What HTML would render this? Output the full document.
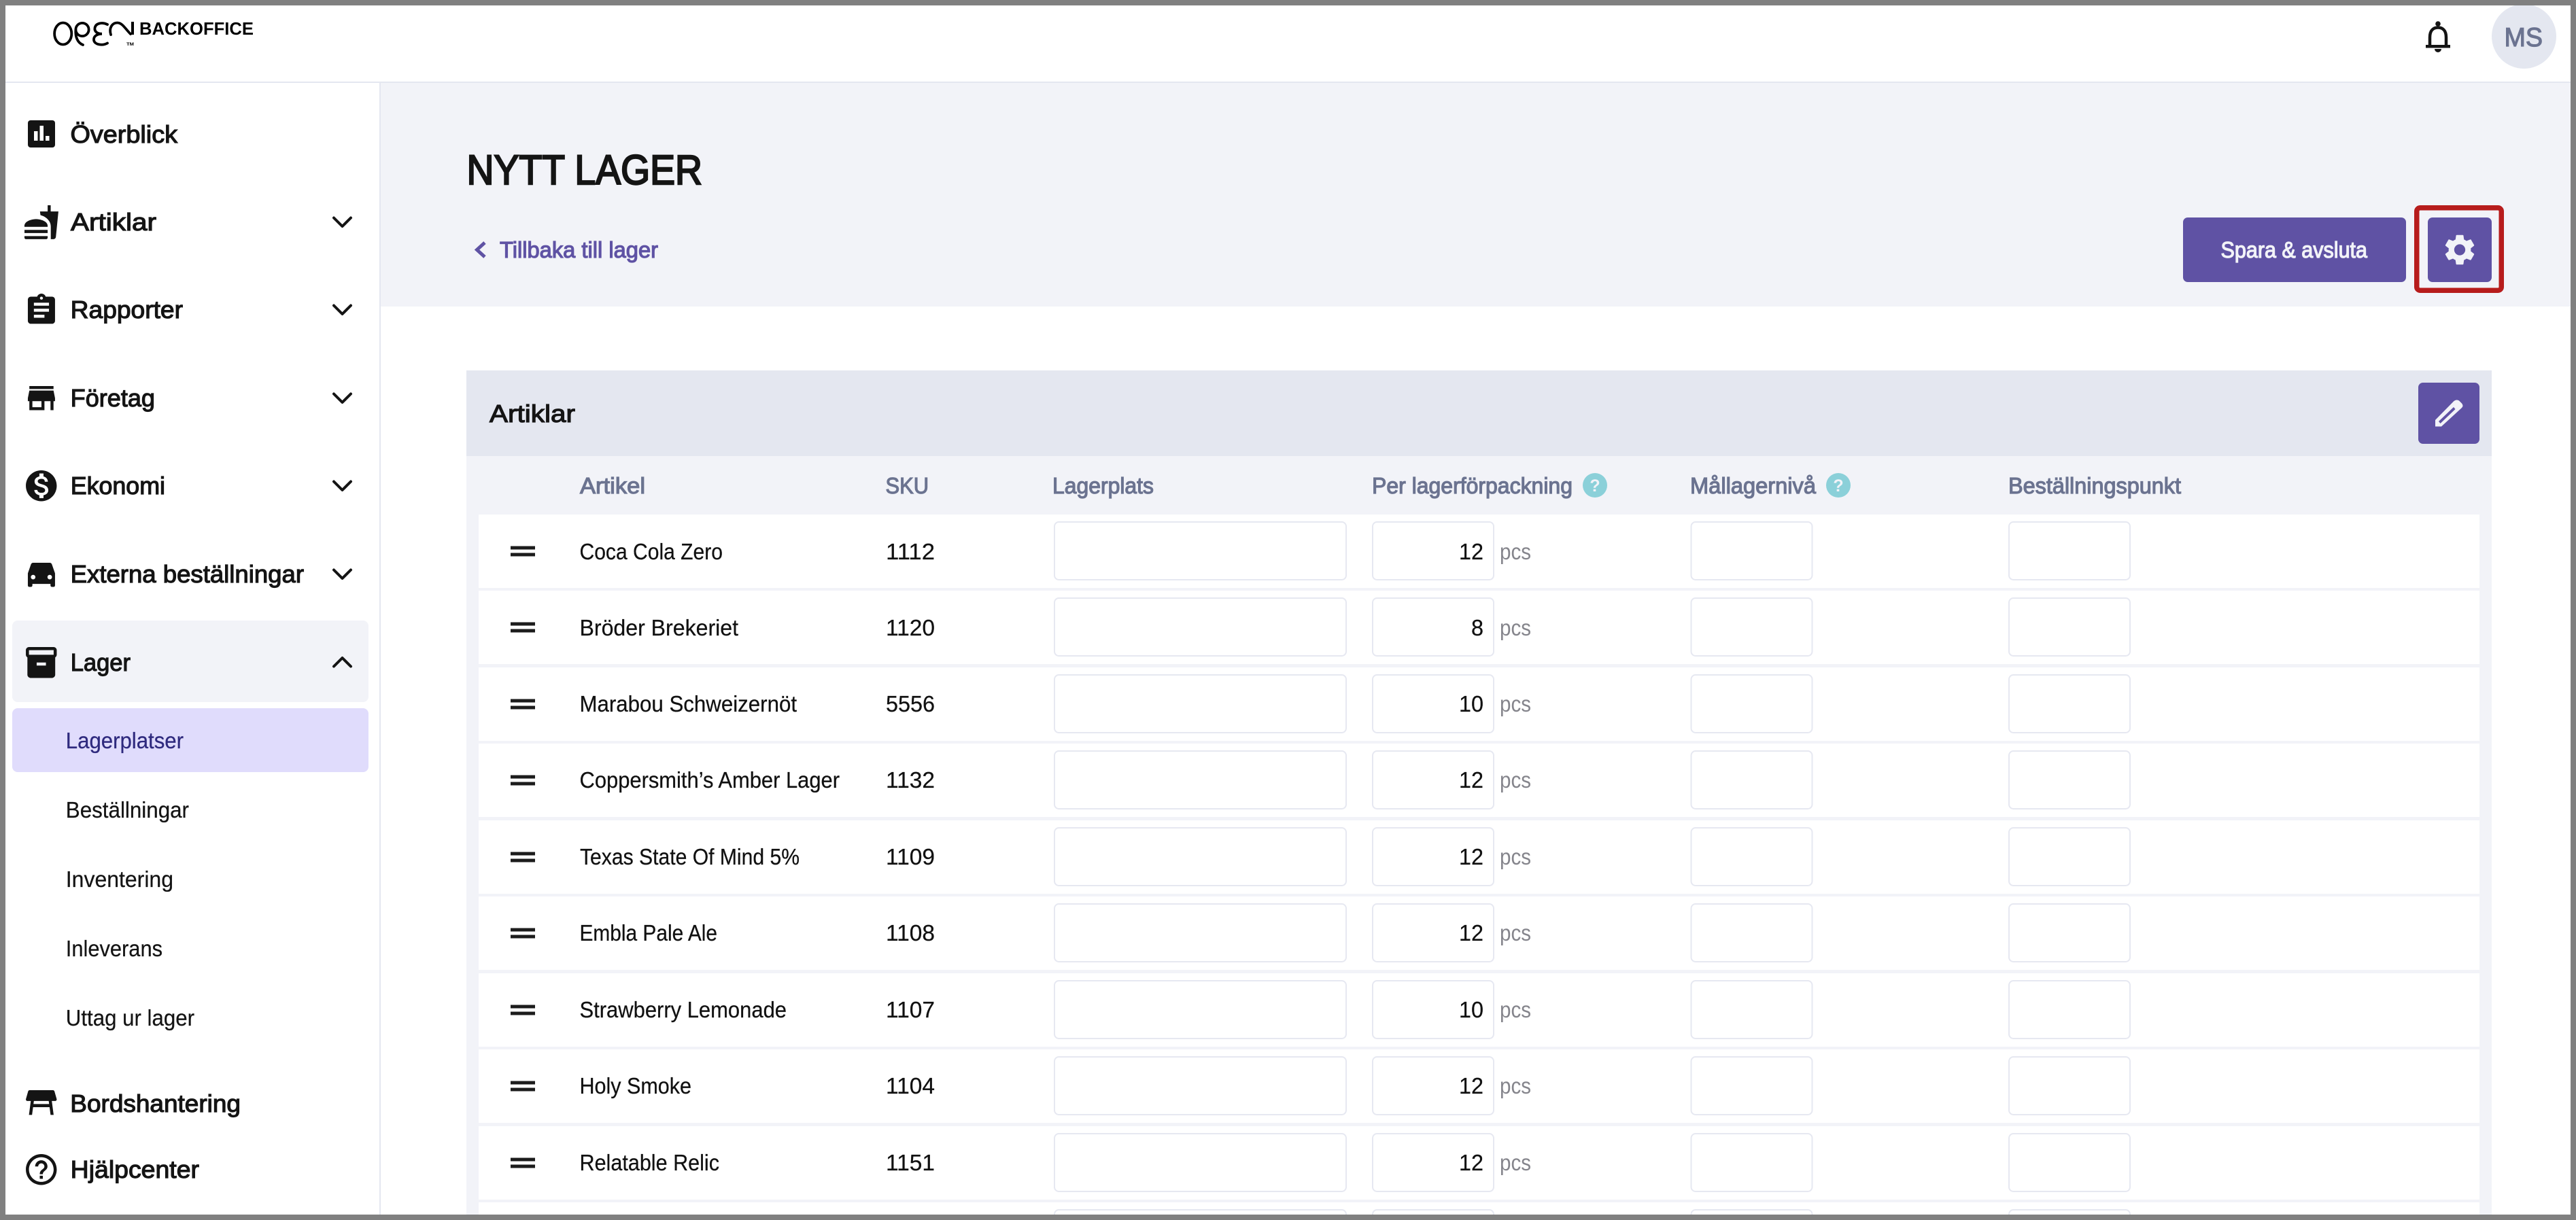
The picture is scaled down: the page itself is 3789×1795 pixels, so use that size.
<!DOCTYPE html>
<html lang="sv">
<head>
<meta charset="utf-8">
<title>Nytt lager</title>
<style>
html,body{margin:0;padding:0;background:#fff;width:3789px;height:1795px;overflow:hidden}
svg{display:block}
text{font-family:"Liberation Sans",sans-serif;fill:#141414}
.n{font-size:36px;stroke:#141414;stroke-width:1.2px}
.s{font-size:33px;stroke:#141414;stroke-width:.25px}
.h{font-size:33px;fill:#6b7390;stroke:#6b7390;stroke-width:1.2px}
.c{font-size:33px;fill:#111;stroke:#111;stroke-width:.25px}
.p{font-size:33px;fill:#85858c}
.ic{fill:#141414}
.ch{fill:none;stroke:#141414;stroke-width:4;stroke-linecap:round;stroke-linejoin:round}
</style>
</head>
<body>
<svg xmlns="http://www.w3.org/2000/svg" width="3789" height="1795" viewBox="0 0 3789 1795">
<defs>
<g id="row">
<rect x="704" y="0" width="2943" height="108" fill="#fff"/>
<rect x="751" y="46.5" width="36" height="5" fill="#1c1c1c"/>
<rect x="751" y="56.5" width="36" height="5" fill="#1c1c1c"/>
<rect x="1551" y="11" width="429" height="85" rx="6.5" fill="#fff" stroke="#e6e8f1" stroke-width="2"/>
<rect x="2019" y="11" width="178" height="85" rx="6.5" fill="#fff" stroke="#e6e8f1" stroke-width="2"/>
<rect x="2487.5" y="11" width="178" height="85" rx="6.5" fill="#fff" stroke="#e6e8f1" stroke-width="2"/>
<rect x="2955" y="11" width="178" height="85" rx="6.5" fill="#fff" stroke="#e6e8f1" stroke-width="2"/>
</g>
</defs>

<rect width="3789" height="1795" fill="#fff"/>

<!-- content header -->
<rect x="560" y="122" width="3229" height="329" fill="#f2f3f8"/>
<rect x="0" y="120" width="3789" height="2" fill="#e4e7f0"/>
<rect x="558" y="122" width="2" height="1673" fill="#e4e7f0"/>

<!-- logo -->
<g fill="none" stroke="#000" stroke-width="3.8" stroke-linecap="round">
<ellipse cx="92.7" cy="49.5" rx="12.6" ry="16"/>
<circle cx="121" cy="43.5" r="9.6"/>
<path d="M111.4 43.5C110.5 54 114 63 122 66"/>
<path d="M158 36C151 32.5 141 33.5 139.5 41C138.500 47 144 49.800 150 49.800C143 49.800 137.500 53 138 59C139 66 151 67.500 158 63.500"/>
<path d="M163 51C160 41 165 33.500 172.500 33.500C180 33.500 184 42 192 50"/>
</g>
<rect x="193" y="32" width="4" height="19" fill="#000"/>
<text x="186" y="67" font-size="6" font-weight="700" textLength="11" lengthAdjust="spacingAndGlyphs" style="fill:#000">TM</text>
<text x="205" y="51" font-size="26" font-weight="700" textLength="168" lengthAdjust="spacingAndGlyphs" style="fill:#000">BACKOFFICE</text>

<!-- sidebar active backgrounds -->
<rect x="18" y="913" width="524" height="120" rx="8" fill="#f2f3f8"/>
<rect x="18" y="1042" width="524" height="94" rx="8" fill="#e0dcfc"/>

<!-- sidebar icons -->
<rect x="41" y="177" width="40" height="40" rx="4" class="ic"/>
<rect x="50" y="193" width="5.500" height="14" fill="#fff"/>
<rect x="58.500" y="185" width="5.500" height="22" fill="#fff"/>
<rect x="67" y="200" width="5.500" height="7" fill="#fff"/>

<svg x="33.700" y="299.700" width="54.500" height="54.500" viewBox="0 0 24 24"><path class="ic" d="M18.060 22.990h1.660c.84 0 1.530-.64 1.630-1.460L23 5.050h-5V1h-1.970v4.050h-4.970l.3 2.340c1.710.47 3.310 1.320 4.270 2.260 1.440 1.420 2.430 2.890 2.430 5.290v8.050zM1 21.990V21h15.030v.99c0 .55-.45 1-1.010 1H2.010c-.56 0-1.010-.45-1.010-1zm15.030-7c.5-3.990-5.500-4.990-7.510-4.990-2.010 0-8.020 1-7.520 4.990h15.030zM1.020 17h15v2h-15z"/></svg>
<svg x="34.300" y="429.800" width="53.300" height="53.300" viewBox="0 0 24 24"><path class="ic" d="M19 3h-4.180C14.400 1.840 13.300 1 12 1c-1.300 0-2.400.84-2.820 2H5c-1.100 0-2 .9-2 2v14c0 1.100.9 2 2 2h14c1.100 0 2-.9 2-2V5c0-1.100-.9-2-2-2zm-7 0c.55 0 1 .45 1 1s-.45 1-1 1-1-.45-1-1 .45-1 1-1zm2 14H7v-2h7v2zm3-4H7v-2h10v2zm0-4H7V7h10v2z"/></svg>
<svg x="34.300" y="559.100" width="53.300" height="53.300" viewBox="0 0 24 24"><path class="ic" d="M20 4H4v2h16V4zm1 10v-2l-1-5H4l-1 5v2h1v6h10v-6h4v6h2v-6h1zm-9 4H6v-4h6v4z"/></svg>
<svg x="33.500" y="687.500" width="54.500" height="54.500" viewBox="0 0 24 24"><path class="ic" d="M12 2C6.480 2 2 6.480 2 12s4.480 10 10 10 10-4.480 10-10S17.520 2 12 2zm1.410 16.090V20h-2.670v-1.930c-1.710-.36-3.160-1.460-3.270-3.400h1.960c.1 1.050.82 1.870 2.650 1.870 1.960 0 2.400-.98 2.400-1.590 0-.83-.44-1.610-2.670-2.140-2.480-.6-4.180-1.620-4.180-3.670 0-1.720 1.390-2.840 3.110-3.210V4h2.670v1.950c1.860.45 2.790 1.860 2.850 3.390H14.300c-.05-1.110-.64-1.870-2.220-1.870-1.500 0-2.400.68-2.400 1.640 0 .84.65 1.390 2.670 1.910s4.180 1.390 4.180 3.910c-.01 1.830-1.380 2.830-3.120 3.160z"/></svg>
<svg x="34.300" y="816.900" width="53.300" height="53.300" viewBox="0 0 24 24"><path class="ic" fill-rule="evenodd" d="M18.920 6.010C18.720 5.420 18.160 5 17.500 5h-11c-.66 0-1.210.42-1.420 1.010L3 12v8c0 .55.45 1 1 1h1c.55 0 1-.45 1-1v-1h12v1c0 .55.45 1 1 1h1c.55 0 1-.45 1-1v-8l-2.080-5.990zM6.500 16c-.83 0-1.500-.67-1.500-1.500S5.670 13 6.500 13s1.500.67 1.500 1.500S7.330 16 6.500 16zm11 0c-.83 0-1.500-.67-1.500-1.500s.67-1.500 1.500-1.500 1.500.67 1.500 1.500-.67 1.500-1.500 1.500z"/></svg>
<svg x="33.500" y="947.500" width="54.500" height="54.500" viewBox="0 0 24 24"><path class="ic" d="M20 2H4c-1 0-2 .9-2 2v3.010c0 .72.43 1.340 1 1.690V20c0 1.100 1.100 2 2 2h14c.9 0 2-.9 2-2V8.700c.57-.35 1-.97 1-1.690V4c0-1.100-1-2-2-2zm-5 12H9v-2h6v2zm5-7H4V4l16-.02V7z"/></svg>
<svg x="33.500" y="1594.900" width="54.500" height="54.500" viewBox="0 0 24 24"><path class="ic" d="M21.960 9.730l-1.430-5C20.410 4.300 20.020 4 19.570 4H4.430C3.980 4 3.590 4.300 3.470 4.730l-1.430 5C1.860 10.360 2.340 11 3 11h2.200L4 20h2l.67-5h10.670L18 20h2l-1.200-9H21C21.660 11 22.140 10.360 21.960 9.730zM6.930 13l.27-2h9.600l.27 2H6.930z"/></svg>
<svg x="33.500" y="1693.500" width="54.500" height="54.500" viewBox="0 0 24 24"><path class="ic" d="M11 18h2v-2h-2v2zm1-16C6.480 2 2 6.480 2 12s4.480 10 10 10 10-4.480 10-10S17.520 2 12 2zm0 18c-4.410 0-8-3.590-8-8s3.590-8 8-8 8 3.590 8 8-3.590 8-8 8zm0-14c-2.210 0-4 1.790-4 4h2c0-1.100.9-2 2-2s2 .9 2 2c0 2-3 1.750-3 5h2c0-2.250 3-2.500 3-5 0-2.210-1.790-4-4-4z"/></svg>

<!-- sidebar labels -->
<text class="n" x="103.500" y="210" textLength="157.500" lengthAdjust="spacingAndGlyphs">Överblick</text>
<text class="n" x="104" y="339" textLength="126" lengthAdjust="spacingAndGlyphs">Artiklar</text>
<text class="n" x="103.700" y="468" textLength="165.300" lengthAdjust="spacingAndGlyphs">Rapporter</text>
<text class="n" x="103.700" y="598" textLength="124.300" lengthAdjust="spacingAndGlyphs">Företag</text>
<text class="n" x="103.700" y="727" textLength="139.300" lengthAdjust="spacingAndGlyphs">Ekonomi</text>
<text class="n" x="103.700" y="857" textLength="343.300" lengthAdjust="spacingAndGlyphs">Externa beställningar</text>
<text class="n" x="103.700" y="987" textLength="88.300" lengthAdjust="spacingAndGlyphs">Lager</text>
<text class="s" x="96.800" y="1101" textLength="173.200" lengthAdjust="spacingAndGlyphs" style="fill:#2f2a7e;stroke:#2f2a7e">Lagerplatser</text>
<text class="s" x="96.800" y="1203" textLength="181.200" lengthAdjust="spacingAndGlyphs">Beställningar</text>
<text class="s" x="96.800" y="1305" textLength="158.200" lengthAdjust="spacingAndGlyphs">Inventering</text>
<text class="s" x="96.800" y="1407" textLength="142.200" lengthAdjust="spacingAndGlyphs">Inleverans</text>
<text class="s" x="96.800" y="1509" textLength="189.200" lengthAdjust="spacingAndGlyphs">Uttag ur lager</text>
<text class="n" x="103.300" y="1636" textLength="250.700" lengthAdjust="spacingAndGlyphs">Bordshantering</text>
<text class="n" x="103.700" y="1733" textLength="189.300" lengthAdjust="spacingAndGlyphs">Hjälpcenter</text>

<!-- chevrons -->
<path class="ch" d="M491 320.500l12.500 12.500L516 320.500"/>
<path class="ch" d="M491 449.500l12.500 12.500L516 449.500"/>
<path class="ch" d="M491 579.500l12.500 12.500L516 579.500"/>
<path class="ch" d="M491 708.500l12.500 12.500L516 708.500"/>
<path class="ch" d="M491 838.500l12.500 12.500L516 838.500"/>
<path class="ch" d="M491 980.500l12.500-12.500L516 980.500"/>

<!-- top right -->
<path d="M3574 67V55C3574 45 3579 40.500 3586 40.500C3593 40.500 3598 45 3598 55V67" fill="none" stroke="#141414" stroke-width="4.500"/>
<rect x="3568" y="66" width="36" height="4.500" fill="#141414"/>
<circle cx="3586" cy="35" r="3.800" fill="#141414"/>
<path d="M3581 72h10a5 5 0 0 1-10 0z" fill="#141414"/>
<circle cx="3712.500" cy="53.500" r="47.500" fill="#e4e7f0"/>
<text x="3683.500" y="68" font-size="39" textLength="56.500" lengthAdjust="spacingAndGlyphs" style="fill:#6b7390;stroke:#6b7390;stroke-width:1.200px">MS</text>

<!-- page title -->
<text x="686.500" y="271" font-size="61" textLength="346.500" lengthAdjust="spacingAndGlyphs" style="stroke:#141414;stroke-width:2.400px">NYTT LAGER</text>
<path d="M713 357l-11.500 10.500L713 378" fill="none" stroke="#5f52a4" stroke-width="5"/>
<text x="735" y="379" font-size="33" textLength="233" lengthAdjust="spacingAndGlyphs" style="fill:#5f52a4;stroke:#5f52a4;stroke-width:1.200px">Tillbaka till lager</text>

<!-- buttons -->
<rect x="3211" y="320" width="328" height="95" rx="7" fill="#5f52a4"/>
<text x="3266.500" y="379" font-size="33" textLength="215.500" lengthAdjust="spacingAndGlyphs" style="fill:#f2f3f8;stroke:#f2f3f8;stroke-width:1.200px">Spara &amp; avsluta</text>
<rect x="3571" y="320" width="94" height="95" rx="7" fill="#5f52a4"/>
<svg x="3590.750" y="340.250" width="54.500" height="54.500" viewBox="0 0 24 24"><path fill="#f2f3f8" d="M19.140 12.940c.04-.3.06-.61.06-.94 0-.32-.02-.64-.07-.94l2.030-1.580c.18-.14.23-.41.12-.61l-1.920-3.320c-.12-.22-.37-.29-.59-.22l-2.390.96c-.5-.38-1.030-.7-1.620-.94l-.36-2.540c-.04-.24-.24-.41-.48-.41h-3.840c-.24 0-.43.17-.47.41l-.36 2.540c-.59.24-1.130.57-1.620.94l-2.390-.96c-.22-.08-.47 0-.59.22L2.740 8.870c-.12.21-.08.47.12.61l2.030 1.580c-.05.3-.09.63-.09.94s.02.64.07.94l-2.030 1.580c-.18.14-.23.41-.12.61l1.920 3.320c.12.22.37.29.59.22l2.390-.96c.5.38 1.030.7 1.620.94l.36 2.540c.05.24.24.41.48.41h3.840c.24 0 .44-.17.47-.41l.36-2.540c.59-.24 1.130-.56 1.620-.94l2.390.96c.22.08.47 0 .59-.22l1.920-3.320c.12-.22.07-.47-.12-.61l-2.010-1.580zM12 15.600c-1.980 0-3.600-1.620-3.600-3.600s1.620-3.600 3.600-3.600 3.600 1.620 3.600 3.600-1.620 3.600-3.600 3.600z"/></svg>
<rect x="3554.750" y="305.750" width="124.500" height="121.500" rx="5" fill="none" stroke="#b71c1c" stroke-width="7.500"/>

<!-- table -->
<rect x="686" y="671" width="2979" height="1124" fill="#f2f3f8"/>
<rect x="686" y="545" width="2979" height="126" fill="#e4e7f0"/>
<text class="n" x="720" y="621" textLength="126" lengthAdjust="spacingAndGlyphs">Artiklar</text>
<rect x="3557" y="563" width="90" height="90" rx="7" fill="#5f52a4"/>
<path fill="#f2f3f8" fill-rule="evenodd" d="M3582 618L3609 590.500Q3613 587 3617 589.500L3621 593.500Q3624 597 3621 600L3591 627.500H3582ZM3587 620L3609 599L3611.500 602L3589.500 623Z"/>

<text class="h" x="853" y="726" textLength="96" lengthAdjust="spacingAndGlyphs">Artikel</text>
<text class="h" x="1302.500" y="726" textLength="63.500" lengthAdjust="spacingAndGlyphs">SKU</text>
<text class="h" x="1548" y="726" textLength="149" lengthAdjust="spacingAndGlyphs">Lagerplats</text>
<text class="h" x="2018" y="726" textLength="295" lengthAdjust="spacingAndGlyphs">Per lagerförpackning</text>
<circle cx="2346" cy="714" r="18" fill="#8bd0d9"/>
<text x="2346" y="723" font-size="25" font-weight="700" text-anchor="middle" style="fill:#f2f3f8">?</text>
<text class="h" x="2486" y="726" textLength="185" lengthAdjust="spacingAndGlyphs">Mållagernivå</text>
<circle cx="2704" cy="714" r="18" fill="#8bd0d9"/>
<text x="2704" y="723" font-size="25" font-weight="700" text-anchor="middle" style="fill:#f2f3f8">?</text>
<text class="h" x="2954" y="726" textLength="254" lengthAdjust="spacingAndGlyphs">Beställningspunkt</text>

<!-- rows -->
<use href="#row" x="0" y="757"/>
<use href="#row" x="0" y="869"/>
<use href="#row" x="0" y="982"/>
<use href="#row" x="0" y="1094"/>
<use href="#row" x="0" y="1207"/>
<use href="#row" x="0" y="1319"/>
<use href="#row" x="0" y="1432"/>
<use href="#row" x="0" y="1544"/>
<use href="#row" x="0" y="1657"/>
<use href="#row" x="0" y="1769"/>

<text class="c" x="852.500" y="823" textLength="210.500" lengthAdjust="spacingAndGlyphs">Coca Cola Zero</text>
<text class="c" x="1303" y="823" textLength="72" lengthAdjust="spacingAndGlyphs">1112</text>
<text class="c" x="2146" y="823" textLength="36" lengthAdjust="spacingAndGlyphs">12</text>
<text class="p" x="2206" y="823" textLength="46" lengthAdjust="spacingAndGlyphs">pcs</text>

<text class="c" x="852.500" y="935" textLength="233.500" lengthAdjust="spacingAndGlyphs">Bröder Brekeriet</text>
<text class="c" x="1303" y="935" textLength="72" lengthAdjust="spacingAndGlyphs">1120</text>
<text class="c" x="2164" y="935" textLength="18" lengthAdjust="spacingAndGlyphs">8</text>
<text class="p" x="2206" y="935" textLength="46" lengthAdjust="spacingAndGlyphs">pcs</text>

<text class="c" x="852.500" y="1047" textLength="319.500" lengthAdjust="spacingAndGlyphs">Marabou Schweizernöt</text>
<text class="c" x="1303" y="1047" textLength="72" lengthAdjust="spacingAndGlyphs">5556</text>
<text class="c" x="2146" y="1047" textLength="36" lengthAdjust="spacingAndGlyphs">10</text>
<text class="p" x="2206" y="1047" textLength="46" lengthAdjust="spacingAndGlyphs">pcs</text>

<text class="c" x="852.500" y="1159" textLength="382.500" lengthAdjust="spacingAndGlyphs">Coppersmith’s Amber Lager</text>
<text class="c" x="1303" y="1159" textLength="72" lengthAdjust="spacingAndGlyphs">1132</text>
<text class="c" x="2146" y="1159" textLength="36" lengthAdjust="spacingAndGlyphs">12</text>
<text class="p" x="2206" y="1159" textLength="46" lengthAdjust="spacingAndGlyphs">pcs</text>

<text class="c" x="853" y="1272" textLength="323" lengthAdjust="spacingAndGlyphs">Texas State Of Mind 5%</text>
<text class="c" x="1303" y="1272" textLength="72" lengthAdjust="spacingAndGlyphs">1109</text>
<text class="c" x="2146" y="1272" textLength="36" lengthAdjust="spacingAndGlyphs">12</text>
<text class="p" x="2206" y="1272" textLength="46" lengthAdjust="spacingAndGlyphs">pcs</text>

<text class="c" x="852.500" y="1384" textLength="202.500" lengthAdjust="spacingAndGlyphs">Embla Pale Ale</text>
<text class="c" x="1303" y="1384" textLength="72" lengthAdjust="spacingAndGlyphs">1108</text>
<text class="c" x="2146" y="1384" textLength="36" lengthAdjust="spacingAndGlyphs">12</text>
<text class="p" x="2206" y="1384" textLength="46" lengthAdjust="spacingAndGlyphs">pcs</text>

<text class="c" x="852.500" y="1497" textLength="304.500" lengthAdjust="spacingAndGlyphs">Strawberry Lemonade</text>
<text class="c" x="1303" y="1497" textLength="72" lengthAdjust="spacingAndGlyphs">1107</text>
<text class="c" x="2146" y="1497" textLength="36" lengthAdjust="spacingAndGlyphs">10</text>
<text class="p" x="2206" y="1497" textLength="46" lengthAdjust="spacingAndGlyphs">pcs</text>

<text class="c" x="852.500" y="1609" textLength="164.500" lengthAdjust="spacingAndGlyphs">Holy Smoke</text>
<text class="c" x="1303" y="1609" textLength="72" lengthAdjust="spacingAndGlyphs">1104</text>
<text class="c" x="2146" y="1609" textLength="36" lengthAdjust="spacingAndGlyphs">12</text>
<text class="p" x="2206" y="1609" textLength="46" lengthAdjust="spacingAndGlyphs">pcs</text>

<text class="c" x="852.500" y="1722" textLength="205.500" lengthAdjust="spacingAndGlyphs">Relatable Relic</text>
<text class="c" x="1303" y="1722" textLength="72" lengthAdjust="spacingAndGlyphs">1151</text>
<text class="c" x="2146" y="1722" textLength="36" lengthAdjust="spacingAndGlyphs">12</text>
<text class="p" x="2206" y="1722" textLength="46" lengthAdjust="spacingAndGlyphs">pcs</text>

<!-- frame -->
<rect x="0" y="0" width="3789" height="8" fill="#808080"/>
<rect x="0" y="1787" width="3789" height="8" fill="#808080"/>
<rect x="0" y="0" width="8" height="1795" fill="#808080"/>
<rect x="3781" y="0" width="8" height="1795" fill="#808080"/>
</svg>
</body>
</html>
